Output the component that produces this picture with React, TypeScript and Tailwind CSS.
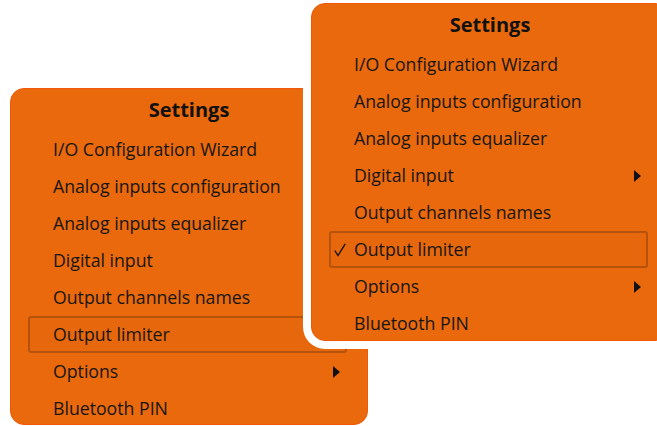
import React from "react";

type Item = { label: string; arrow?: boolean; selected?: boolean; checked?: boolean };

const leftItems: Item[] = [
  { label: "I/O Configuration Wizard" },
  { label: "Analog inputs configuration" },
  { label: "Analog inputs equalizer" },
  { label: "Digital input" },
  { label: "Output channels names" },
  { label: "Output limiter", selected: true },
  { label: "Options", arrow: true },
  { label: "Bluetooth PIN" },
];

const rightItems: Item[] = [
  { label: "I/O Configuration Wizard" },
  { label: "Analog inputs configuration" },
  { label: "Analog inputs equalizer" },
  { label: "Digital input", arrow: true },
  { label: "Output channels names" },
  { label: "Output limiter", selected: true, checked: true },
  { label: "Options", arrow: true },
  { label: "Bluetooth PIN" },
];

function Arrow() {
  return (
    <svg width="7" height="12" viewBox="0 0 7 12" className="shrink-0">
      <path d="M0 0 L7 6 L0 12 Z" fill="#111" />
    </svg>
  );
}

function Check() {
  return (
    <svg width="12" height="14" viewBox="0 0 12 14">
      <path d="M0.8 7.5 L4 12.6 L11.2 0.8" fill="none" stroke="#111" strokeWidth="1.3" />
    </svg>
  );
}

function Menu({ items }: { items: Item[] }) {
  return (
    <div className="flex flex-col">
      <div className="h-[42px] flex items-center justify-center font-bold text-[20px] text-[#111]">Settings</div>
      {items.map((it) => (
        <div
          key={it.label}
          className={
            "h-[37px] ml-[17px] mr-[20px] pr-[5px] flex items-center rounded-[3px] border-2 " +
            (it.selected ? "border-[#b5530c] bg-[#e7670c]" : "border-transparent")
          }
        >
          <span className="w-[23px] shrink-0 flex items-center pl-[3px]">{it.checked && <Check />}</span>
          <span className="flex-1 text-[17.7px] text-[#161616]">{it.label}</span>
          {it.arrow && <Arrow />}
        </div>
      ))}
    </div>
  );
}

export default function App() {
  return (
    <div
      className="relative w-[657px] h-[426px] bg-white overflow-hidden"
      style={{ fontFamily: '"Open Sans", "Noto Sans", sans-serif' }}
    >
      <div className="absolute left-[10px] top-[88px] w-[358px] h-[337px] rounded-[14px] bg-[#e9690c] border border-[#f05808]">
        <Menu items={leftItems} />
      </div>
      <div className="absolute left-[303px] top-[-5px] w-[374px] h-[354px] rounded-[22px] bg-white p-[8px]">
        <div className="w-[358px] h-[338px] rounded-[14px] bg-[#e9690c] border border-[#f05808]">
          <Menu items={rightItems} />
        </div>
      </div>
    </div>
  );
}
